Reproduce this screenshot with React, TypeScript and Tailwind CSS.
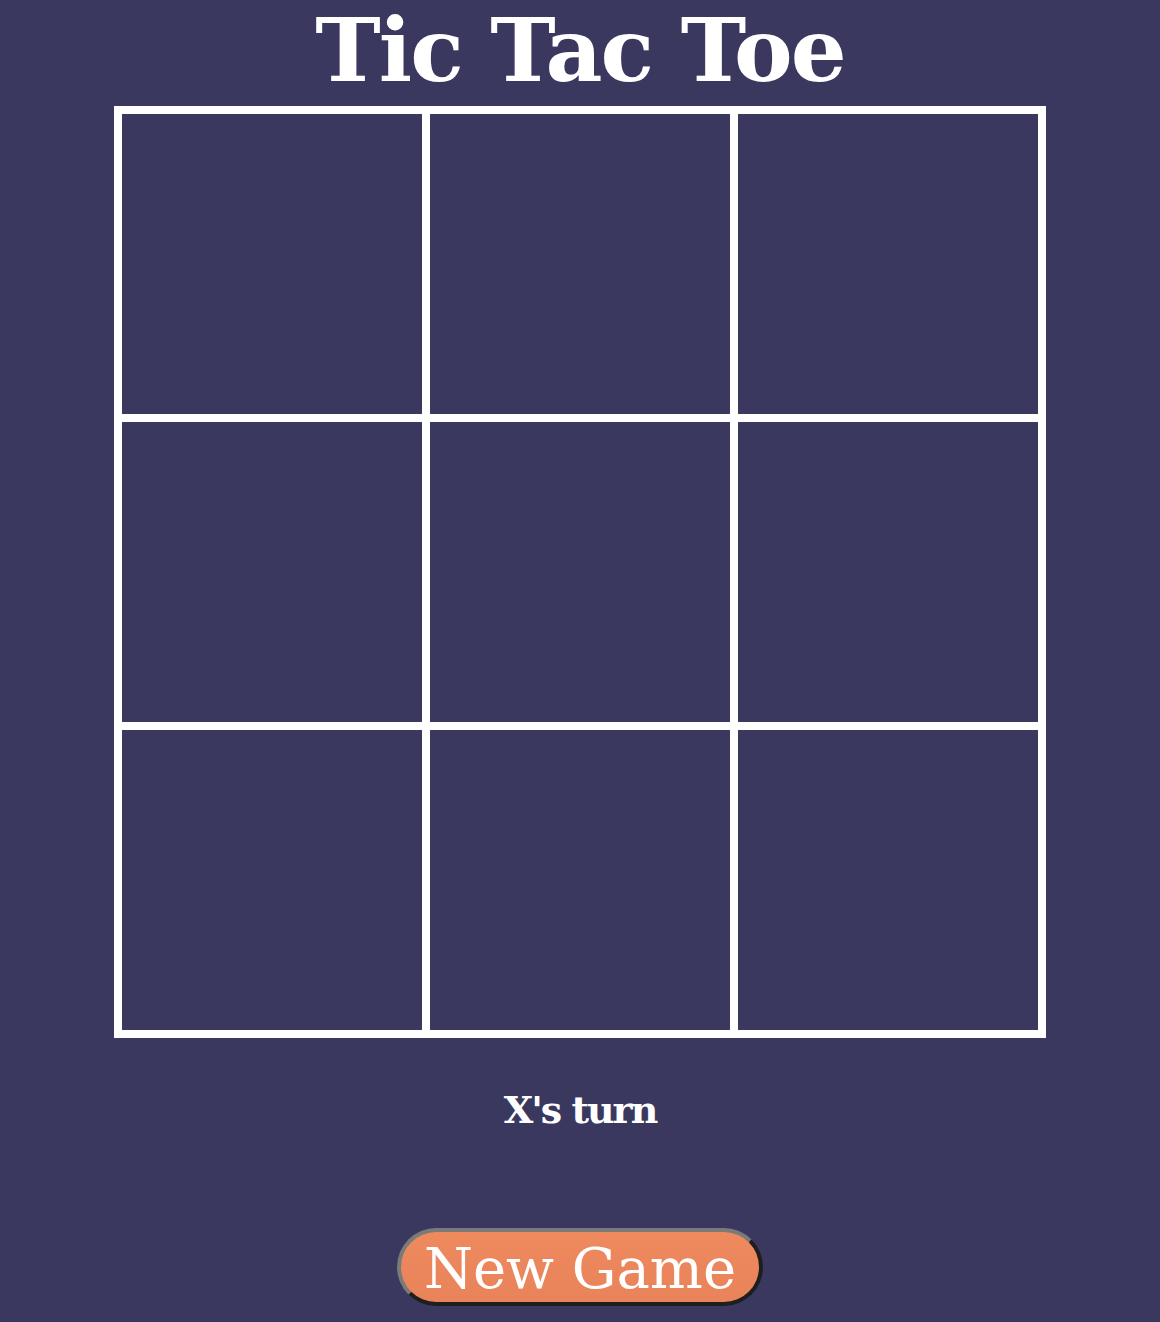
import React from "react";

export default function App() {
  const cells = Array.from({ length: 9 });
  return (
    <div className="min-h-[1322px] w-full bg-[#3b385f] flex flex-col items-center" style={{ fontFamily: '"DejaVu Serif", serif' }}>
      <h1 className="h-[106px] flex items-center justify-center text-white font-bold text-[88px] leading-none tracking-[-2px] pb-[6px]">
        Tic Tac Toe
      </h1>
      <div className="grid grid-cols-[repeat(3,300px)] grid-rows-[repeat(3,300px)] gap-[8px] p-[8px] bg-white">
        {cells.map((_, i) => (
          <div key={i} className="bg-[#3b385f]" />
        ))}
      </div>
      <div className="mt-[52px] h-[40px] flex items-center text-white font-bold text-[38px] tracking-[-2px] leading-none">
        X's turn
      </div>
      <button className="mt-[98px] h-[78px] w-[366px] rounded-full border-4 border-t-[#7a7a7a] border-l-[#7a7a7a] border-b-[#1e1e1e] border-r-[#1e1e1e] bg-gradient-to-b from-[#ef8a5f] to-[#e8835a] text-white text-[56px] leading-none flex items-center justify-center pt-[4px]">
        New Game
      </button>
    </div>
  );
}
